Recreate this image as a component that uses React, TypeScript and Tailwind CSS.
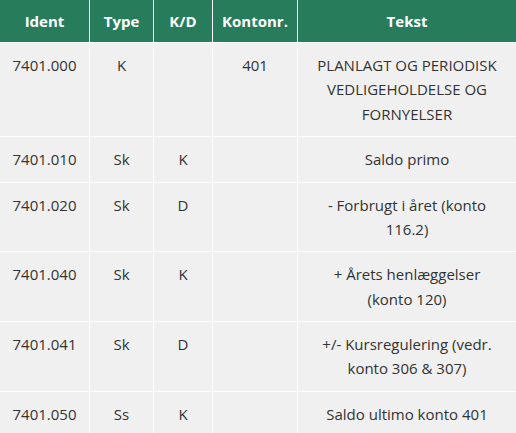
const HEAD = ["Ident", "Type", "K/D", "Kontonr.", "Tekst"];

const ROWS: string[][] = [
  ["7401.000", "K", "", "401", "PLANLAGT OG PERIODISK VEDLIGEHOLDELSE OG FORNYELSER"],
  ["7401.010", "Sk", "K", "", "Saldo primo"],
  ["7401.020", "Sk", "D", "", "- Forbrugt i året (konto 116.2)"],
  ["7401.040", "Sk", "K", "", "+ Årets henlæggelser (konto 120)"],
  ["7401.041", "Sk", "D", "", "+/- Kursregulering (vedr. konto 306 & 307)"],
  ["7401.050", "Ss", "K", "", "Saldo ultimo konto 401"],
];

export default function App() {
  return (
    <div className="w-[516px] bg-white font-['Open_Sans',sans-serif] text-[15px] leading-[1.625]">
      <div className="grid grid-cols-[89px_63px_58px_84px_218px] gap-px bg-white">
        {HEAD.map((h) => (
          <div key={h} className="h-[42px] flex items-center justify-center bg-[#267c5b] text-white font-bold">
            {h}
          </div>
        ))}
        {ROWS.map((row) =>
          row.map((cell, i) => (
            <div
              key={row[0] + i}
              className={
                i === 4
                  ? "bg-[#f0f0f0] text-[#333] text-center px-[17px] py-[10px]"
                  : "bg-[#f0f0f0] text-[#333] text-center px-[4px] py-[10px]"
              }
            >
              {cell}
            </div>
          ))
        )}
      </div>
    </div>
  );
}
